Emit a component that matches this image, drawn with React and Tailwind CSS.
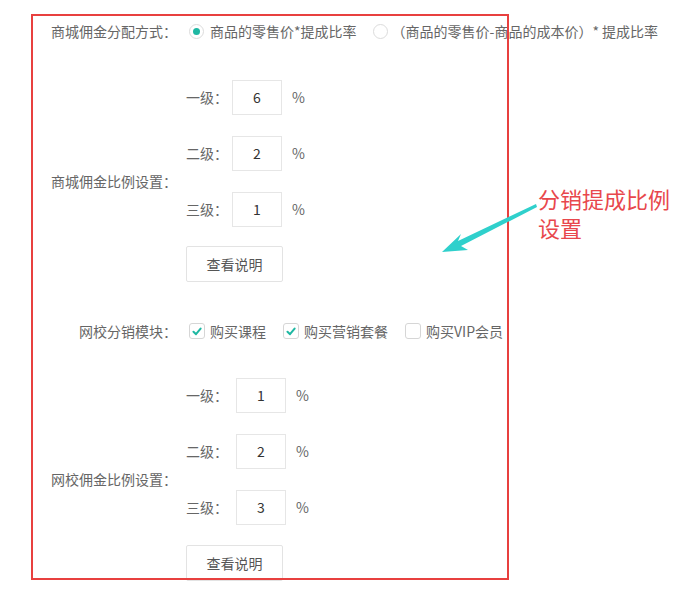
import React from "react";

const font = { fontFamily: '"Noto Sans CJK SC", "Noto Sans", sans-serif' };

function Radio({ checked }) {
  return (
    <span className="flex h-[15px] w-[15px] items-center justify-center rounded-full border border-[#dcdcdc] bg-white">
      {checked && <span className="h-[7px] w-[7px] rounded-full bg-[#1fb8a3]" />}
    </span>
  );
}

function Check({ checked }) {
  return (
    <span className="flex h-[16px] w-[16px] items-center justify-center rounded-[3px] border border-[#d6d6d6] bg-white">
      {checked && (
        <svg width="10" height="9" viewBox="0 0 10 9">
          <path d="M1.5 4.8 L4 7.2 L8.6 1.6" fill="none" stroke="#1fb8a3" strokeWidth="2" strokeLinecap="round" strokeLinejoin="round" />
        </svg>
      )}
    </span>
  );
}

function LevelRow({ label, value, gap }) {
  return (
    <div className="flex h-[35px] items-center">
      <span className="w-[46px] text-[14px] text-[#666]">{label}</span>
      <div className={`flex h-[35px] w-[50px] items-center justify-center border border-[#e6e6e6] text-[14px] text-[#333] ${gap}`}>
        {value}
      </div>
      <span className="ml-[10px] text-[14px] text-[#666]">%</span>
    </div>
  );
}

function Section({ label, values, gap, btnGap }) {
  return (
    <div className="flex items-center">
      <div className="w-[177px] text-right text-[14px] text-[#666]">{label}</div>
      <div className="ml-[9px] flex flex-col">
        <div className="flex flex-col gap-[21px]">
          <LevelRow label="一级：" value={values[0]} gap={gap} />
          <LevelRow label="二级：" value={values[1]} gap={gap} />
          <LevelRow label="三级：" value={values[2]} gap={gap} />
        </div>
        <button className={`flex h-[36px] w-[97px] items-center justify-center rounded-[2px] border border-[#e3e3e3] bg-white text-[14px] text-[#555] ${btnGap}`}>
          查看说明
        </button>
      </div>
    </div>
  );
}

export default function App() {
  return (
    <div className="relative h-[590px] w-[692px] overflow-hidden bg-white" style={font}>
      <div className="flex flex-col">
        <div className="mt-[16px] flex h-[30px] items-center">
          <div className="w-[177px] text-right text-[14px] text-[#666]">商城佣金分配方式：</div>
          <div className="ml-[12px] flex items-center">
            <Radio checked />
            <span className="ml-[6px] text-[14px] text-[#666]">商品的零售价*提成比率</span>
            <span className="ml-[16px]"><Radio /></span>
            <span className="ml-[4px] text-[14px] text-[#666]">（商品的零售价-商品的成本价）* 提成比率</span>
          </div>
        </div>

        <div className="mt-[34px]">
          <Section label="商城佣金比例设置：" values={["6", "2", "1"]} gap="ml-0" btnGap="mt-[19px]" />
        </div>

        <div className="mt-[34px] flex h-[30px] items-center">
          <div className="w-[177px] text-right text-[14px] text-[#666]">网校分销模块：</div>
          <div className="ml-[12px] flex items-center">
            <Check checked />
            <span className="ml-[5px] text-[14px] text-[#666]">购买课程</span>
            <span className="ml-[17px]"><Check checked /></span>
            <span className="ml-[5px] text-[14px] text-[#666]">购买营销套餐</span>
            <span className="ml-[17px]"><Check /></span>
            <span className="ml-[5px] text-[14px] text-[#666]">购买VIP会员</span>
          </div>
        </div>

        <div className="mt-[32px]">
          <Section label="网校佣金比例设置：" values={["1", "2", "3"]} gap="ml-[4px]" btnGap="mt-[20px]" />
        </div>
      </div>

      {/* annotation overlay */}
      <div className="absolute left-[31px] top-[14px] h-[566px] w-[478px] border-2 border-[#e8403f]" />
      <svg className="absolute left-0 top-0" width="692" height="590" viewBox="0 0 692 590">
        <path d="M536 204 L458 241 L461 234 L442 252 L468 250 L461 246 L537 207 Z" fill="#2fd0cc" />
      </svg>
      <div className="absolute left-[538px] top-[184px] text-[22px] leading-[29px] text-[#e8474c]">
        分销提成比例
        <br />
        设置
      </div>
    </div>
  );
}
